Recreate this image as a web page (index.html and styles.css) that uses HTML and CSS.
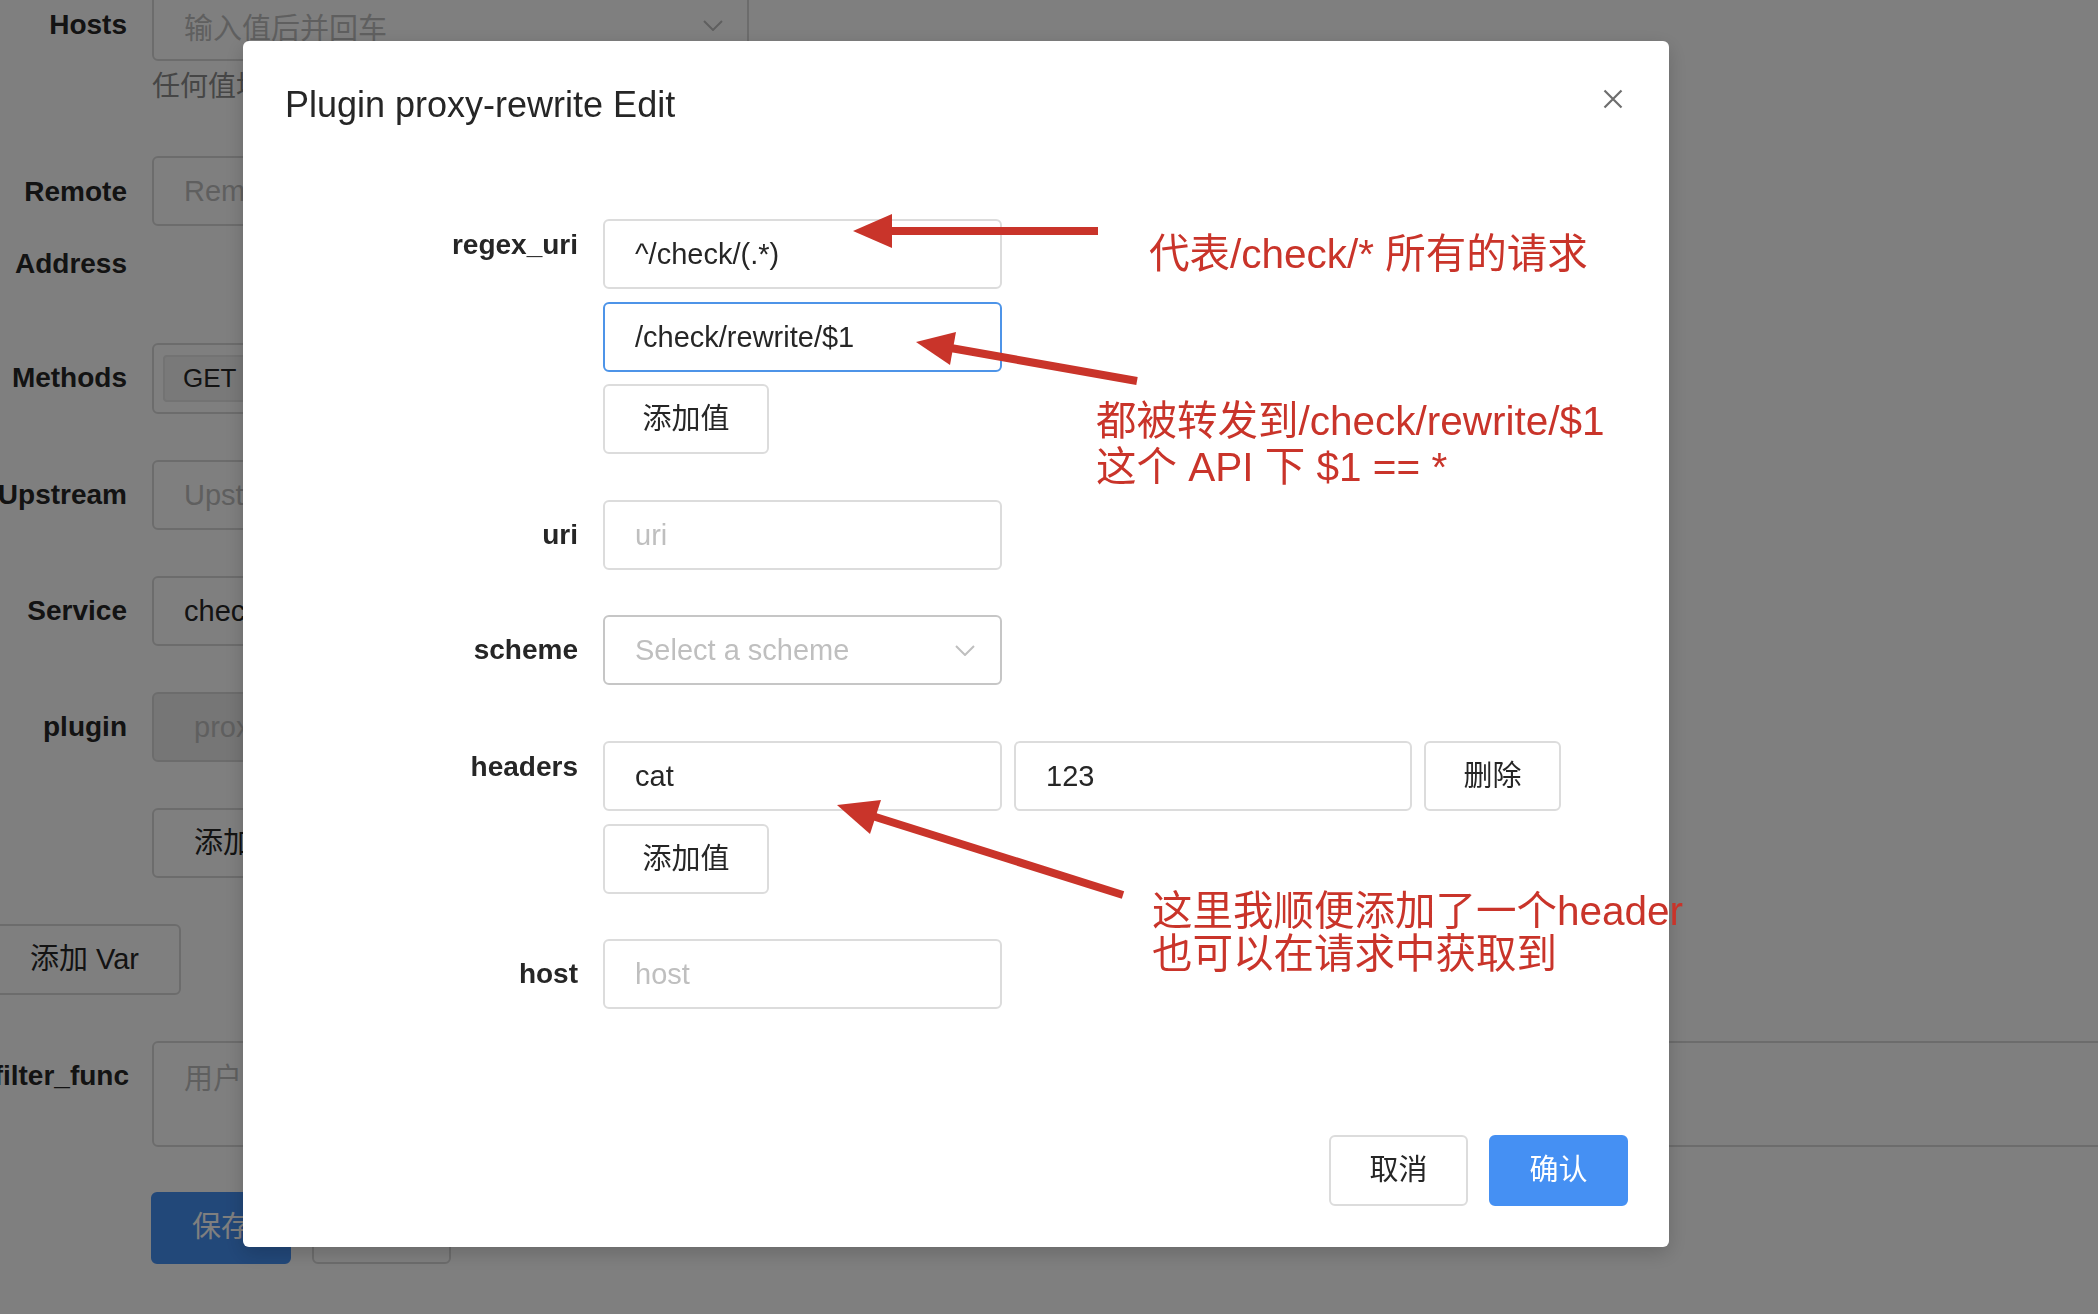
FILE: index.html
```html
<!DOCTYPE html>
<html lang="zh-CN">
<head>
<meta charset="utf-8">
<title>Plugin proxy-rewrite Edit</title>
<link rel="stylesheet" href="styles.css">
</head>
<body>
<div class="page">
  <div class="bg-row bg-hosts">
    <div class="bg-label">Hosts</div>
    <div class="bg-ctl">
      <div class="bg-input bg-select"><span class="bg-ph">输入值后并回车</span><svg class="bg-arrow" viewBox="0 0 20 11"><path d="M1 1l9 9 9-9"/></svg></div>
      <div class="bg-help">任何值均可</div>
    </div>
  </div>
  <div class="bg-row bg-remote">
    <div class="bg-label bg-label-2"><span>Remote<br>Address</span></div>
    <div class="bg-ctl"><div class="bg-input"><span class="bg-ph">Remote Address</span></div></div>
  </div>
  <div class="bg-row bg-methods">
    <div class="bg-label">Methods</div>
    <div class="bg-ctl"><div class="bg-input bg-tags"><span class="bg-tag">GET</span><span class="bg-tag">POST</span></div></div>
  </div>
  <div class="bg-row bg-std">
    <div class="bg-label">Upstream</div>
    <div class="bg-ctl"><div class="bg-input"><span class="bg-ph">Upstream</span></div></div>
  </div>
  <div class="bg-row bg-std">
    <div class="bg-label">Service</div>
    <div class="bg-ctl"><div class="bg-input"><span class="bg-val">check-service</span></div></div>
  </div>
  <div class="bg-row bg-std">
    <div class="bg-label">plugin</div>
    <div class="bg-ctl"><div class="bg-input bg-disabled"><span class="bg-dis">proxy-rewrite</span></div></div>
  </div>
  <div class="bg-row bg-std">
    <div class="bg-label"></div>
    <div class="bg-ctl"><div class="bg-btn bg-btn-add">添加插件</div></div>
  </div>
  <div class="bg-var-wrap"><div class="bg-btn bg-btn-var">添加 Var</div></div>
  <div class="bg-row bg-filter">
    <div class="bg-label">filter_func</div>
    <div class="bg-ctl"><div class="bg-input bg-textarea"><span class="bg-ph">用户自定义的过滤函数</span></div></div>
  </div>
  <div class="bg-actions">
    <div class="bg-btn bg-btn-primary">保存</div>
    <div class="bg-btn bg-btn-plain">取消</div>
  </div>
</div>

<div class="mask"></div>

<div class="modal-wrap">
  <div class="modal">
    <div class="modal-header">
      <div class="modal-title">Plugin proxy-rewrite Edit</div>
      <svg class="modal-close" viewBox="0 0 20 20"><path d="M1.5 1.5L18.5 18.5M18.5 1.5L1.5 18.5"/></svg>
    </div>
    <div class="modal-body">
      <div class="f-row f-row-list">
        <div class="f-label">regex_uri</div>
        <div class="f-ctl">
          <div class="f-input">^/check/(.*)</div>
          <div class="f-input f-focus">/check/rewrite/$1</div>
          <div class="f-btn f-btn-add">添加值</div>
        </div>
      </div>
      <div class="f-row f-row-uri">
        <div class="f-label">uri</div>
        <div class="f-ctl"><div class="f-input f-ph">uri</div></div>
      </div>
      <div class="f-row">
        <div class="f-label">scheme</div>
        <div class="f-ctl">
          <div class="f-input f-select"><span class="f-ph">Select a scheme</span><svg class="f-arrow" viewBox="0 0 20 11"><path d="M1 1l9 9 9-9"/></svg></div>
        </div>
      </div>
      <div class="f-row f-row-list f-row-headers">
        <div class="f-label">headers</div>
        <div class="f-ctl">
          <div class="f-pair">
            <div class="f-input">cat</div>
            <div class="f-input f-input-val">123</div>
            <div class="f-btn f-btn-del">删除</div>
          </div>
          <div class="f-btn f-btn-add">添加值</div>
        </div>
      </div>
      <div class="f-row">
        <div class="f-label">host</div>
        <div class="f-ctl"><div class="f-input f-ph">host</div></div>
      </div>
    </div>
    <div class="modal-footer">
      <div class="m-btn m-btn-cancel">取消</div>
      <div class="m-btn m-btn-ok">确认</div>
    </div>
  </div>
</div>

<svg class="notes" viewBox="0 0 2098 1314">
  <line class="note-line" x1="1098" y1="231" x2="885" y2="231"/>
  <polygon class="note-head" points="853,231 892,214 892,248"/>
  <text class="note-text" x="1149" y="268">代表/check/* 所有的请求</text>

  <line class="note-line" x1="1137" y1="381" x2="945" y2="347"/>
  <polygon class="note-head" points="916,342 956,332 950,365"/>
  <text class="note-text" x="1096" y="435">都被转发到/check/rewrite/$1</text>
  <text class="note-text" x="1096" y="481">这个 API 下 $1 == *</text>

  <line class="note-line" x1="1123" y1="895" x2="866" y2="814"/>
  <polygon class="note-head" points="837,805 881,800 870,834"/>
  <text class="note-text" x="1152" y="925">这里我顺便添加了一个header</text>
  <text class="note-text" x="1152" y="968">也可以在请求中获取到</text>
</svg>
</body>
</html>
```

FILE: styles.css
```css
html, body {
  margin: 0;
  padding: 0;
}
body {
  width: 2098px;
  height: 1314px;
  overflow: hidden;
  background: #ffffff;
  font-family: "Liberation Sans", "Noto Sans CJK SC", sans-serif;
  color: #262626;
}

/* ---------- background page ---------- */
.page {
  display: flex;
  flex-direction: column;
  width: 2098px;
}
.bg-row {
  display: grid;
  grid-template-columns: 127px 597px;
  column-gap: 25px;
}
.bg-label {
  display: flex;
  justify-content: flex-end;
  white-space: nowrap;
  font-size: 28px;
  font-weight: bold;
  line-height: 70px;
  color: #262626;
}
.bg-label-2 span {
  text-align: right;
  line-height: 72px;
}
.bg-input {
  box-sizing: border-box;
  height: 70px;
  border: 2px solid #d9d9d9;
  border-radius: 6px;
  background: #fff;
  display: flex;
  align-items: center;
  padding: 0 30px;
  font-size: 29px;
  white-space: nowrap;
  overflow: hidden;
}
.bg-ph { color: #bfbfbf; }
.bg-val { color: #262626; }
.bg-dis { color: #bfbfbf; padding-left: 10px; }
.bg-disabled { background: #ececec; }
.bg-select {
  justify-content: space-between;
  height: 71px;
  padding-right: 24px;
}
.bg-arrow {
  width: 20px;
  height: 11px;
  fill: none;
  stroke: #bfbfbf;
  stroke-width: 2;
}
.bg-help {
  margin-top: 6px;
  font-size: 28px;
  line-height: 40px;
  color: #8c8c8c;
  white-space: nowrap;
}
.bg-hosts { margin-top: -10px; }
.bg-remote { margin-top: 49px; }
.bg-methods { margin-top: 43px; }
.bg-methods .bg-input { height: 71px; }
.bg-tags { padding: 0 9px; gap: 10px; }
.bg-tag {
  box-sizing: border-box;
  height: 47px;
  line-height: 43px;
  padding: 0 18px;
  background: #f2f2f2;
  border: 2px solid #e6e6e6;
  border-radius: 4px;
  font-size: 26px;
  color: #262626;
}
.bg-std { margin-top: 46px; }
.bg-btn {
  box-sizing: border-box;
  height: 70px;
  border: 2px solid #d9d9d9;
  border-radius: 6px;
  background: #fff;
  font-size: 29px;
  line-height: 66px;
  text-align: center;
  white-space: nowrap;
}
.bg-ctl { min-width: 0; }
.bg-btn-add {
  display: inline-block;
  padding: 0 40px;
}
.bg-var-wrap {
  margin-top: 46px;
  margin-left: -12px;
}
.bg-btn-var { width: 193px; height: 71px; }
.bg-filter { margin-top: 46px; grid-template-columns: 129px 1960px; column-gap: 23px; }
.bg-filter .bg-label { line-height: 70px; }
.bg-textarea {
  height: 106px;
  align-items: flex-start;
  padding-top: 12px;
}
.bg-actions {
  margin-top: 45px;
  margin-left: 151px;
  display: flex;
  gap: 21px;
}
.bg-btn-primary {
  width: 140px;
  height: 72px;
  background: #4590f3;
  border-color: #4590f3;
  color: #fff;
}
.bg-btn-plain {
  width: 139px;
  height: 72px;
}

/* ---------- mask + modal ---------- */
.mask {
  position: fixed;
  inset: 0;
  background: rgba(0, 0, 0, 0.5);
}
.modal-wrap {
  position: fixed;
  inset: 0;
  padding: 41px 0 0 243px;
}
.modal {
  box-sizing: border-box;
  width: 1426px;
  height: 1206px;
  background: #fff;
  border-radius: 6px;
  box-shadow: 0 6px 20px rgba(0, 0, 0, 0.18);
  display: flex;
  flex-direction: column;
}
.modal-header {
  display: flex;
  justify-content: space-between;
  align-items: flex-start;
  padding: 42px 46px 0 42px;
}
.modal-title {
  font-size: 36px;
  line-height: 44px;
  color: #262626;
}
.modal-close {
  width: 20px;
  height: 20px;
  margin-top: 6px;
  fill: none;
  stroke: #6e6e6e;
  stroke-width: 2.2;
}
.modal-body {
  margin-top: 92px;
  display: flex;
  flex-direction: column;
  gap: 45px;
}
.f-row {
  display: grid;
  grid-template-columns: 335px auto;
  column-gap: 25px;
  align-items: start;
}
.f-label {
  text-align: right;
  font-size: 28px;
  font-weight: bold;
  line-height: 70px;
  color: #262626;
  white-space: nowrap;
}
.f-row-list .f-label { line-height: 52px; }
.f-row-uri { margin-top: 1px; }
.f-row-headers { margin-top: 11px; }
.f-ctl {
  display: flex;
  flex-direction: column;
  align-items: flex-start;
  gap: 12px;
}
.f-row-headers .f-ctl { gap: 13px; }
.f-input {
  box-sizing: border-box;
  width: 399px;
  height: 70px;
  border: 2px solid #dcdcdc;
  border-radius: 6px;
  background: #fff;
  padding: 0 30px;
  font-size: 29px;
  line-height: 66px;
  color: #262626;
  white-space: nowrap;
}
.f-ph { color: #bfbfbf; }
.f-input.f-focus {
  border-color: #4d94e8;
  margin-top: 1px;
}
.f-select {
  display: flex;
  justify-content: space-between;
  align-items: center;
  border-color: #c6c6c6;
  padding-right: 25px;
}
.f-arrow {
  width: 20px;
  height: 11px;
  fill: none;
  stroke: #bfbfbf;
  stroke-width: 2;
}
.f-pair {
  display: flex;
  gap: 12px;
}
.f-input-val { width: 398px; }
.f-btn {
  box-sizing: border-box;
  height: 70px;
  border: 2px solid #dcdcdc;
  border-radius: 6px;
  background: #fff;
  font-size: 29px;
  line-height: 66px;
  text-align: center;
  color: #262626;
  white-space: nowrap;
}
.f-btn-add { width: 166px; }
.f-btn-del { width: 137px; }
.modal-footer {
  margin-top: auto;
  display: flex;
  justify-content: flex-end;
  gap: 21px;
  padding: 0 41px 41px 0;
}
.m-btn {
  box-sizing: border-box;
  width: 139px;
  height: 71px;
  border-radius: 6px;
  font-size: 29px;
  line-height: 67px;
  text-align: center;
}
.m-btn-cancel {
  border: 2px solid #dcdcdc;
  background: #fff;
  color: #262626;
}
.m-btn-ok {
  border: 2px solid #4590f3;
  background: #4590f3;
  color: #fff;
}

/* ---------- annotations ---------- */
.notes {
  position: fixed;
  left: 0;
  top: 0;
  width: 2098px;
  height: 1314px;
  pointer-events: none;
}
.note-line {
  stroke: #c9342a;
  stroke-width: 8;
}
.note-head {
  fill: #c9342a;
}
.note-text {
  font-family: "Liberation Sans", "Noto Sans CJK SC", sans-serif;
  font-size: 40.5px;
  fill: #c9342a;
}
```
